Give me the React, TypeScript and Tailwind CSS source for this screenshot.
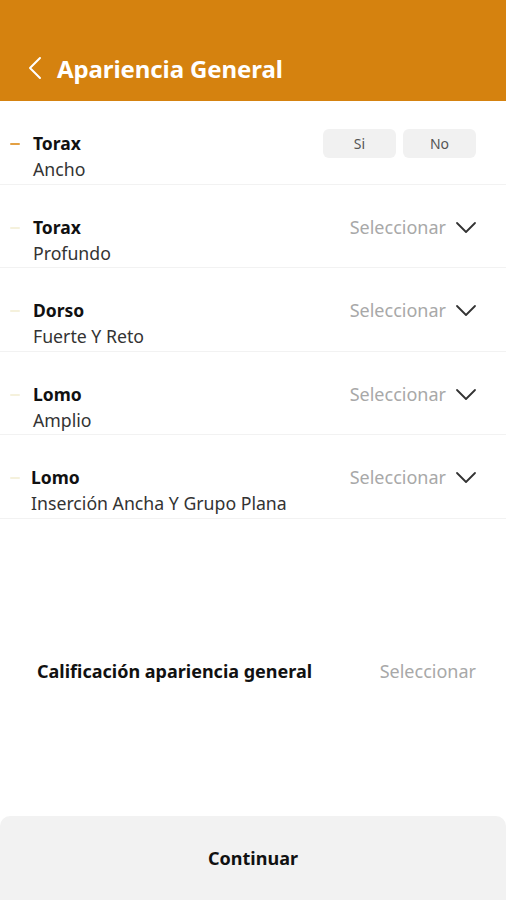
import React from 'react';

interface Item {
  title: string;
  value: string;
  kind: 'toggle' | 'select';
  active?: boolean;
  shift?: boolean;
  tall?: boolean;
}

const items: Item[] = [
  { title: 'Torax', value: 'Ancho', kind: 'toggle', active: true, tall: true },
  { title: 'Torax', value: 'Profundo', kind: 'select' },
  { title: 'Dorso', value: 'Fuerte Y Reto', kind: 'select', tall: true },
  { title: 'Lomo', value: 'Amplio', kind: 'select' },
  { title: 'Lomo', value: 'Inserción Ancha Y Grupo Plana', kind: 'select', shift: true, tall: true },
];

const ChevronDownThin = () => (
  <svg width="22" height="13" viewBox="0 0 22 13" fill="none">
    <polyline points="2,2 11,11 20,2" stroke="#333" strokeWidth="1.8" strokeLinecap="round" strokeLinejoin="round" />
  </svg>
);

const Row: React.FC<{ item: Item }> = ({ item }) => (
  <div className={`flex items-start border-b border-[#f2f2f2] pt-[30px] ${item.tall ? 'h-[84px]' : 'h-[83px]'}`}>
    <div className="w-[33px] shrink-0 pl-[10px] pt-[12px]">
      <div className={`w-[10px] h-[2px] rounded ${item.active ? 'bg-[#e3a043]' : 'bg-[#f5f1dc]'}`} />
    </div>
    <div className={`flex-1 flex flex-col ${item.shift ? '-ml-[2px]' : ''}`}>
      <span className="text-[17.5px] leading-[25px] font-bold text-[#111]">{item.title}</span>
      <span className="text-[17.7px] leading-[25px] text-[#333] mt-[1px]">{item.value}</span>
    </div>
    {item.kind === 'toggle' ? (
      <div className="flex gap-[7px] pr-[30px] -mt-[2px]">
        <button className="w-[73px] h-[29px] rounded-md bg-[#f1f1f1] text-[14px] text-[#555]">Si</button>
        <button className="w-[73px] h-[29px] rounded-md bg-[#f1f1f1] text-[14px] text-[#555]">No</button>
      </div>
    ) : (
      <div className="flex items-center gap-[9px] pr-[29px]">
        <span className="text-[18px] leading-[25px] text-[#a8a8a8]">Seleccionar</span>
        <ChevronDownThin />
      </div>
    )}
  </div>
);

const App: React.FC = () => {
  return (
    <div className="w-[506px] h-[900px] bg-white flex flex-col overflow-hidden" style={{ fontFamily: '"Noto Sans", sans-serif' }}>
      {/* Header */}
      <div className="h-[101px] shrink-0 bg-[#d5820f] flex items-end pb-[16px] pl-[27px] gap-[14px]">
        <svg width="16" height="24" viewBox="0 0 16 24" fill="none" className="mb-[5px]">
          <polyline points="13,2 3,12 13,22" stroke="white" strokeWidth="2" strokeLinecap="round" strokeLinejoin="round" />
        </svg>
        <h1 className="text-[24px] leading-[32px] font-bold text-white tracking-[-0.1px]">Apariencia General</h1>
      </div>

      {/* Rows */}
      <div className="flex flex-col">
        {items.map((item, i) => (
          <Row key={i} item={item} />
        ))}
      </div>

      {/* Calificación */}
      <div className="flex items-center justify-between pl-[37px] pr-[30px] mt-[139px]">
        <span className="text-[18px] leading-[26px] font-bold text-[#111]">Calificación apariencia general</span>
        <span className="text-[18px] leading-[26px] text-[#a8a8a8]">Seleccionar</span>
      </div>

      <div className="flex-1" />

      {/* Footer */}
      <div className="h-[84px] shrink-0 bg-[#f2f2f2] rounded-t-[10px] flex items-center justify-center">
        <span className="text-[18px] font-bold text-[#111]">Continuar</span>
      </div>
    </div>
  );
};

export default App;
